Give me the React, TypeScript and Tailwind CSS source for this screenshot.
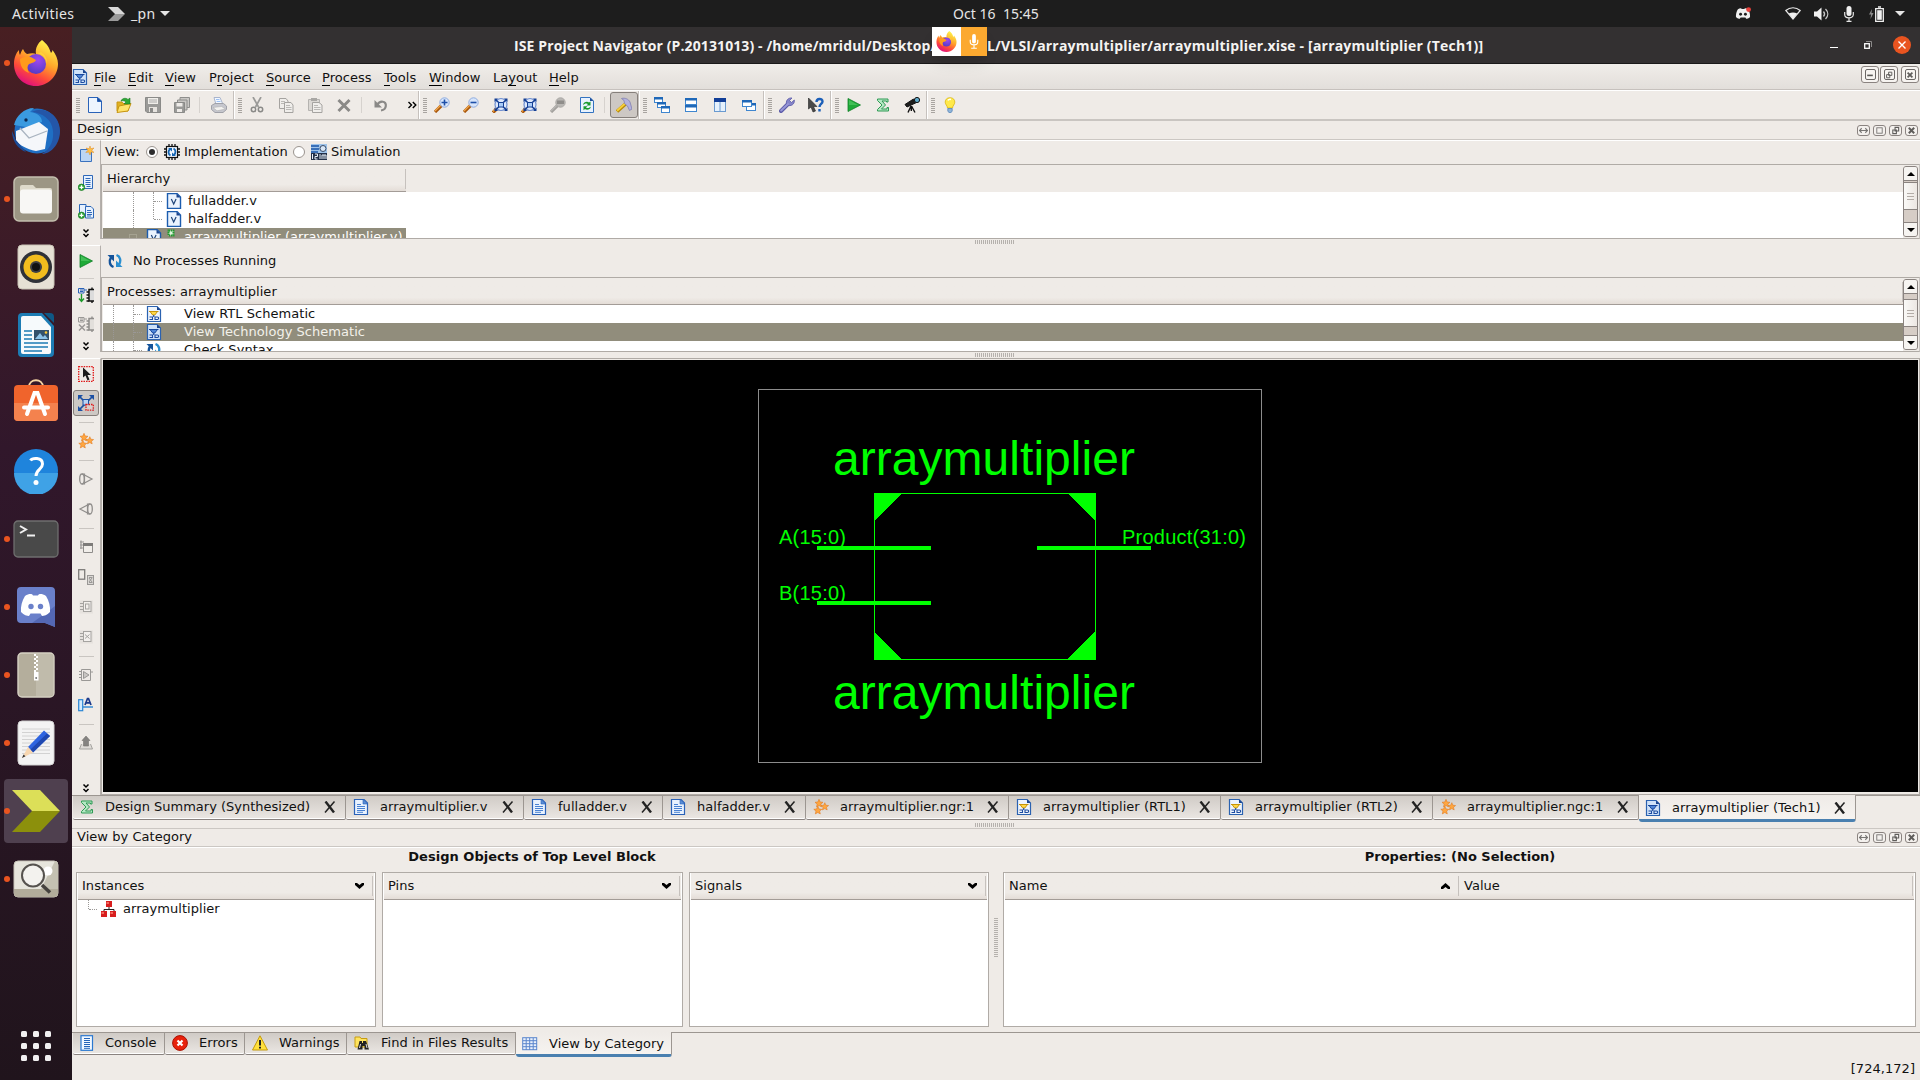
import React from "react";

type SvgProps = { w?: number; h?: number; vb?: string; children: React.ReactNode; className?: string };

function Svg({ w = 16, h = 16, vb = "0 0 16 16", children, className = "" }: SvgProps) {
  return (
    <svg width={w} height={h} viewBox={vb} className={"block shrink-0 " + className} fill="none">
      {children}
    </svg>
  );
}

/* ---------- small application icons ---------- */

const pagePath = "M1.5 .5H11L14.5 4V15.5H1.5Z";

const NewFile = () => (
  <Svg>
    <path d={pagePath} fill="#eef5fe" stroke="#2a62b8" />
    <path d="M10.5 .5V4.5H14.5Z" fill="#1d4f9c" stroke="#2a62b8" />
  </Svg>
);
const OpenFile = () => (
  <Svg>
    <path d="M1 5H6L7 6.5H12V14H1Z" fill="#e0b020" stroke="#c79512" />
    <path d="M3 9L15 6.5L12 14L1 15.5Z" fill="#ffe36b" stroke="#c79512" />
    <path d="M5 4C6 1 10 .5 12 2.5L14 1V7H8L10 5C8.500 3.500 7 3.500 5 4Z" fill="#2ea836" stroke="#177a20" strokeWidth=".6" />
  </Svg>
);
const Save = () => (
  <Svg>
    <path d="M.5 .5H15.500V15.500H2L.5 14Z" fill="#9a9a98" stroke="#8a8a88" />
    <path d="M3 1H13V7H3Z" fill="#f0eeea" />
    <path d="M4 3H12M4 5H12" stroke="#aaa" />
    <path d="M4 10H12V15H4Z" fill="#e6e3df" />
    <path d="M5 11H8V15H5Z" fill="#8a8a88" />
  </Svg>
);
const SaveAll = () => (
  <Svg>
    <path d="M6 .5H15.500V10.500H6Z" fill="#c9c7c4" stroke="#8e8e8c" />
    <path d="M3.500 3H13V13H3.500Z" fill="#c9c7c4" stroke="#8e8e8c" />
    <path d="M.5 5.500H10.500V15.500H.5Z" fill="#9a9a98" stroke="#8a8a88" />
    <path d="M2.500 6H8.500V9.500H2.500ZM3 12H8V15H3Z" fill="#eeebe8" />
  </Svg>
);
const Print = () => (
  <Svg>
    <path d="M3 .5L9 .5L12 7.500H5Z" fill="#f3f8ff" stroke="#a9b4cc" />
    <path d="M5 2.500H8.500M5.600 4.500H9.500" stroke="#9cc0f4" />
    <path d="M.5 8.500L4 6.500H12.500L15.500 9V12.500L12 15.500H4L.5 12.500Z" fill="#c6c7ce" stroke="#a0a1a8" />
    <path d="M2 10.500L10.500 9.500L14.500 12L6 13.800Z" fill="#f3f2f0" stroke="#aaa" strokeWidth=".5" />
  </Svg>
);
const Cut = () => (
  <Svg>
    <path d="M4 0L9.500 10M12 0L6.500 10" stroke="#9a9a98" strokeWidth="1.700" />
    <circle cx="4.500" cy="12.500" r="2.200" stroke="#8a8a88" strokeWidth="1.500" />
    <circle cx="11.500" cy="12.500" r="2.200" stroke="#8a8a88" strokeWidth="1.500" />
  </Svg>
);
const Copy = () => (
  <Svg>
    <path d="M1.500 1.500H8L10 4V11.500H1.500Z" fill="#f0eeeb" stroke="#a5a3a0" />
    <path d="M6.500 5.500H13L15 8V15.500H6.500Z" fill="#f0eeeb" stroke="#a5a3a0" />
    <path d="M8 8.500H12M8 10.500H13.500M8 12.500H13.500M3 4.500H7M3 6.500H6" stroke="#bbb9b6" />
  </Svg>
);
const Paste = () => (
  <Svg>
    <path d="M1.500 2.500H12.500V13.500H1.500Z" fill="#dbd8d4" stroke="#b5b3b0" />
    <path d="M4 1H10V4H4Z" fill="#a9a7a4" />
    <path d="M5.500 5.500H12L15 8V15.500H5.500Z" fill="#f0eeeb" stroke="#a5a3a0" />
    <path d="M7 8.500H11M7 10.500H13.500M7 12.500H13.500" stroke="#bbb9b6" />
  </Svg>
);
const DeleteX = () => (
  <Svg>
    <path d="M2.500 3L13.500 14M13.500 3L2.500 14" stroke="#8a8987" strokeWidth="3" />
  </Svg>
);
const Undo = () => (
  <Svg>
    <path d="M4 8C7 3 13.500 4 12.800 9C12.600 11 11.500 13 8 13.500" stroke="#8a8987" strokeWidth="2.200" />
    <path d="M1.500 3V10.500H9Z" fill="#8a8987" />
  </Svg>
);
const Zoom = ({ kind }: { kind: "in" | "out" | "fit" | "sel" | "off" }) => {
  const off = kind === "off";
  const big = kind === "fit" || kind === "sel";
  return (
    <Svg>
      <path d={big ? "M1 15.500L5 11.500" : "M1 15L7.500 8.500"} stroke={off ? "#a3a19e" : "#a8570c"} strokeWidth="3.200" />
      <path d={big ? "M1 14.500L5 10.500" : "M1 14L7 8"} stroke={off ? "#b9b7b4" : "#f0a64a"} strokeWidth="1.200" />
      {big ? (
        <>
          <circle cx="9" cy="7.500" r="6" fill="#dfe9fb" stroke="#6f8fd0" strokeWidth="1.200" />
          <path d="M3.500 2.500L14.500 13M14.500 2.500L3.500 13" stroke="#153f94" strokeWidth="1.500" />
          <path d="M6.500 5.500H11.500V10H6.500Z" fill="#a9cbf7" stroke="#153f94" />
          <path d="M2.500 1.500H6L2.500 5ZM15.500 1.500H12L15.500 5ZM2.500 14H6L2.500 10.500ZM15.500 14H12L15.500 10.500Z" fill="#153f94" />
        </>
      ) : (
        <>
          <circle cx="10.500" cy="5.500" r="4.700" fill={off ? "#b9b7b4" : "#d7e5fb"} stroke={off ? "#aaa8a5" : "#8fabdf"} />
          {kind === "in" && <path d="M7.500 5.500H13.500M10.500 2.500V8.500" stroke="#1d4fa8" strokeWidth="1.600" />}
          {kind === "out" && <path d="M7.500 5.500H13.500" stroke="#1d4fa8" strokeWidth="1.600" />}
          {off && <path d="M7 3.500H14V7H7Z" fill="#8f8d8a" />}
        </>
      )}
    </Svg>
  );
};
const Refresh = () => (
  <Svg>
    <path d={pagePath} fill="#e8f2fe" stroke="#3373c0" />
    <path d="M11 .5L14.500 4H11Z" fill="#1d4f9c" />
    <path d="M4 8C4.500 4.500 8.500 4 10 5.500L11.500 4.500V8.500H7.500L9 7C7.500 6 5.500 6.500 4 8Z" fill="#189a2c" />
    <path d="M12 9.500C11.500 13 7.500 13.500 6 12L4.500 13.300V9.300H8.500L7 10.500C8.500 11.500 10.500 11 12 9.500Z" fill="#189a2c" />
  </Svg>
);
const Hammer = () => (
  <Svg>
    <path d="M1 14.500L9.500 7" stroke="#b88a08" strokeWidth="3.600" />
    <path d="M1 13.800L9.500 6.300" stroke="#f6cf3c" strokeWidth="2" />
    <path d="M5.500 1.500C9 .5 12.500 2 14 5L16 12L13.500 13.500L11.500 9L8.500 6.500L8 3.500Z" fill="#b3b2de" stroke="#7877ac" strokeWidth=".7" />
  </Svg>
);
const Win = ({ x, y, w, h }: { x: number; y: number; w: number; h: number }) => (
  <>
    <rect x={x + 0.5} y={y + 0.5} width={w} height={h} fill="#fff" stroke="#3f86cf" />
    <rect x={x} y={y} width={w + 1} height="2.500" fill="#1f68b8" />
  </>
);
const Cascade = () => (
  <Svg>
    <Win x={0} y={0} w={8} h={5} />
    <Win x={3} y={5} w={8} h={5} />
    <Win x={7} y={9} w={8} h={6} />
  </Svg>
);
const TileH = () => (
  <Svg>
    <Win x={2} y={1} w={11} h={6} />
    <Win x={2} y={8} w={11} h={6} />
  </Svg>
);
const TileV = () => (
  <Svg>
    <rect x="2.500" y="1.500" width="11" height="13" fill="#e5f1fd" stroke="#6a9ad0" />
    <path d="M2 1H14V5H2Z" fill="#123f98" />
    <path d="M8 5V15" stroke="#6a9ad0" />
  </Svg>
);
const Layer = () => (
  <Svg>
    <Win x={5} y={6} w={9} h={7} />
    <Win x={1} y={3} w={9} h={6} />
  </Svg>
);
const Wrench = () => (
  <Svg>
    <path d="M2 14L9 7" stroke="#5b5aa8" strokeWidth="4" strokeLinecap="round" />
    <path d="M8 8C6 4 9 .5 13 1L10.500 3.500L12.500 5.500L15.300 3C16 7 12 10 8 8Z" fill="#8685c8" stroke="#5b5aa8" strokeWidth=".8" />
    <path d="M2.200 13.500L9 7" stroke="#9897d6" strokeWidth="2" strokeLinecap="round" />
  </Svg>
);
const HelpArrow = () => (
  <Svg>
    <path d="M.5 1V12L3 10L5 15L7.500 14L5.500 9.500H9Z" fill="#4a4a4a" stroke="#222" strokeWidth=".6" />
    <path d="M8.500 5C8.500 1 14.500 1 14.500 4.500C14.500 7 11.500 7 11.500 10M11.500 12V14.500" stroke="#1c5fb8" strokeWidth="2.400" />
  </Svg>
);
const Play = () => (
  <Svg>
    <path d="M2 1.500L14.500 8L2 14.500Z" fill="#1faa38" stroke="#128028" strokeWidth=".8" />
    <path d="M3 3L12 8H3Z" fill="#5fd070" opacity=".55" />
  </Svg>
);
const Sigma = () => (
  <Svg>
    <path d="M2.500 2H13V5H11.500V4H7L10.500 8L6.500 12H12V10.500H13.500V14H2.500V12.500L7 8L2.500 3.500Z" fill="#b5e8c4" stroke="#2f9a54" strokeWidth="1" />
  </Svg>
);
const Telescope = () => (
  <Svg>
    <path d="M1 7.500L9.500 2L12.500 5.500L3 10Z" fill="#1c1c1c" stroke="#111" />
    <circle cx="13" cy="3" r="2.600" fill="#5fa8c8" stroke="#111" />
    <path d="M7 9L4 15.500M7.500 9L11 15.500M7.300 9V14" stroke="#111" strokeWidth="1.400" />
  </Svg>
);
const Bulb = () => (
  <Svg>
    <path d="M8 .7C4.500 .7 3.200 3 3.200 5.200C3.200 7.500 5.300 8.500 5.500 11H10.500C10.700 8.500 12.800 7.500 12.800 5.200C12.800 3 11.500 .7 8 .7Z" fill="#ffe94a" stroke="#d6b000" strokeWidth=".7" />
    <path d="M6 3.500C6.500 2.500 8 2 9 2.500" stroke="#fff" strokeWidth="1.500" />
    <path d="M5.800 11.500H10.200V14L9 15.700H7L5.800 14Z" fill="#8fb4d8" stroke="#4c7eb4" strokeWidth=".7" />
  </Svg>
);
const Schem = ({ gold = false }: { gold?: boolean }) => (
  <Svg>
    <path d={pagePath} fill={gold ? "#eef4fc" : "#cfe2f8"} stroke="#2b62b0" strokeWidth="1.200" />
    <path d="M11 .5L14.500 4H11Z" fill="#1b458e" />
    <path d="M3 5.500H12.500M4 5.500H11.500L8.800 9H6.700Z" fill={gold ? "#ffd84a" : "#4f86d6"} stroke={gold ? "#c89508" : "#17479c"} />
    <path d="M7.700 9V11M3.500 11H6.500V13.500H3.500M9 11H11.500C13 11 13 13.500 11.500 13.500H9Z" stroke="#1c4ba0" strokeWidth="1.100" />
  </Svg>
);
const Doc = () => (
  <Svg>
    <path d={pagePath} fill="#e9f2fe" stroke="#2a62b8" strokeWidth="1.200" />
    <path d="M10 .5L14.500 5H10Z" fill="#5b8fd8" stroke="#2a62b8" strokeWidth=".6" />
    <path d="M4 5.500H8M4 7.500H12M4 9.500H12M4 11.500H12M4 13.300H10" stroke="#4a82d2" />
  </Svg>
);
const VFile = () => (
  <Svg>
    <path d={pagePath} fill="#eaf3fe" stroke="#1c5cae" strokeWidth="1.400" />
    <path d="M10.500 .5L14.500 4.500H10.500Z" fill="#1b458e" />
    <path d="M5.300 6L7.700 11L10.100 6" stroke="#20467a" strokeWidth="1.200" />
  </Svg>
);
const star = "M0 -4L1.200 -1.300L4 -1L1.800 .8L2.500 3.600L0 2.200L-2.500 3.600L-1.800 .8L-4 -1L-1.200 -1.300Z";
const Stars = () => (
  <Svg>
    <g fill="#ffa640" stroke="#e07a20" strokeWidth=".6">
      <path d={star} transform="translate(6 4.300)" />
      <path d={star} transform="translate(11.800 7.500) scale(.95)" />
      <path d={star} transform="translate(4.800 11.300)" />
    </g>
  </Svg>
);
const Cycle = () => (
  <Svg>
    <path d="M6.500 14C2.500 12.500 1.800 8 4 4.500" stroke="#14539a" strokeWidth="2.400" />
    <path d="M.5 2H7V8.500Z" fill="#14539a" />
    <path d="M9.500 2C13.500 3.500 14.200 8 12 11.500" stroke="#2b8fd0" strokeWidth="2.400" />
    <path d="M15.500 14H9V7.500Z" fill="#2b8fd0" />
  </Svg>
);
const Chip = () => (
  <Svg>
    <path d="M5 0V16M8 0V16M11 0V16M0 5H16M0 8H16M0 11H16" stroke="#111" strokeWidth="1.300" />
    <rect x="2.500" y="2.500" width="11" height="11" fill="#f4f9ff" stroke="#111" strokeWidth="1.200" />
    <path d="M6.500 11.500C4 10 4 7 6 5M9.500 4.500C12 6 12 9 10 11" stroke="#1666b4" strokeWidth="1.800" />
    <path d="M4 4H8V7.500ZM12 12H8V8.500Z" fill="#1666b4" />
  </Svg>
);
const Sim = () => (
  <Svg>
    <rect x="0" y="0" width="16" height="16" fill="#9ec3ea" />
    <path d="M0 2H8M0 5H8M0 8H7" stroke="#1a56a8" strokeWidth="1.400" />
    <circle cx="12" cy="4.500" r="3" fill="#d8e6f6" stroke="#3a4c68" />
    <path d="M0 9H16V16H0Z" fill="#233047" />
    <path d="M1.500 10V15M4 10H6.500V12.500H4V15H6.500M9 10V15M11 15V11H15V15M13 11V15" stroke="#e8f0fa" />
  </Svg>
);
const AddDoc = ({ two = false }: { two?: boolean }) => (
  <Svg>
    {two && <path d="M1.500 1.500H8V12H1.500Z" fill="#e7f1fe" stroke="#2f68b8" />}
    <path d={two ? "M7.500 3.500H13L15.500 6V15H7.500Z" : "M5.500 .5H14.500V13.500H5.500Z"} fill="#e7f1fe" stroke="#2f68b8" />
    <path d={two ? "M9 7.500H13M9 9.500H14M9 11.500H14M9 13H13" : "M7.500 3.500H12.500M7.500 5.500H12.500M7.500 7.500H12.500M7.500 9.500H12.500M8.500 11.500H12.500"} stroke="#2f68b8" />
    <circle cx="3.500" cy="12.300" r="3.200" fill="#2fa83a" stroke="#14761e" strokeWidth=".7" />
    <path d="M1.500 12.300H5.500M3.500 10.300V14.300" stroke="#fff" strokeWidth="1.300" />
  </Svg>
);
const NewSrc = () => (
  <Svg>
    <path d="M2.500 3.500H13.500V15.500H2.500Z" fill="#bcd6f4" stroke="#3a72be" />
    <path d="M12 0L12.800 2.700L16 2L13.800 4.200L16 6.500L13 6L12 9L10.800 6L7.800 6.500L10 4.200L8 2L11.200 2.700Z" fill="#ffc04a" stroke="#e08a1a" strokeWidth=".5" />
  </Svg>
);
const ProcIcon = ({ off = false }: { off?: boolean }) => (
  <Svg>
    <path d="M.5 1.500H6V6H.5ZM2 3H5M2 4.500H5M6 3H9" stroke={off ? "#9a9896" : "#2a62b8"} />
    <path d="M16 2.500H11V14H16" fill={off ? "#e2dfdb" : "#dcdcdc"} stroke={off ? "#8f8d8b" : "#111"} strokeWidth="1.500" />
    <path d="M8.500 5H11M8.500 8H11M8.500 11H11M8.500 14H11M14 .5V2.500M14 14V16" stroke={off ? "#8f8d8b" : "#111"} strokeWidth="1.400" />
    {off ? <path d="M1 8.500L7 14.500M7 8.500L1 14.500" stroke="#9a9896" strokeWidth="1.500" /> : <path d="M3.500 7V14M1 11.500L3.500 14.500L6 11.500" stroke="#1f9a2c" strokeWidth="1.400" />}
  </Svg>
);
const ArrowSel = () => (
  <Svg>
    <rect x=".7" y=".7" width="14.600" height="14.600" stroke="#e01818" strokeWidth="1.300" strokeDasharray="1.500 1" />
    <path d="M5 1.500V11.500L7.500 9.500L9.500 14.500L11.500 13.500L9.500 9H13Z" fill="#1b1b1b" />
  </Svg>
);
const Expand = () => (
  <Svg>
    <path d="M1 1L15 15M15 1L1 15" stroke="#1c50a4" strokeWidth="1.700" />
    <path d="M0 0H5L0 5ZM16 0H11L16 5ZM0 16H5L0 11Z" fill="#1c50a4" />
    <rect x="5" y="4.500" width="5.500" height="5.500" fill="#b8d4f6" stroke="#1c50a4" />
    <rect x="8" y="9.500" width="7.300" height="5.700" fill="#d8d0cc" stroke="#e01818" strokeWidth="1.300" strokeDasharray="1.500 1" />
  </Svg>
);
const Cone = ({ flip = false }: { flip?: boolean }) => (
  <Svg className={flip ? "-scale-x-100" : ""}>
    <ellipse cx="4" cy="8" rx="2.300" ry="5" stroke="#8f8d8b" strokeWidth="1.300" />
    <path d="M4 3H6.500V13H4M6.500 4L14 8L6.500 12" stroke="#8f8d8b" strokeWidth="1.200" />
  </Svg>
);
const Gray1 = () => (
  <Svg>
    <path d="M2 3H6M2 6H6M2 9H5M3 1.500V10" stroke="#9a9896" strokeWidth="1.200" />
    <path d="M5.500 4.500H14.500V13.500H5.500Z" fill="#f1eeea" stroke="#8f8d8b" />
    <path d="M5 4H15V7H5Z" fill="#7d7b79" />
  </Svg>
);
const Gray2 = () => (
  <Svg>
    <rect x=".7" y=".7" width="6" height="9.500" stroke="#7d7b79" strokeWidth="1.300" />
    <rect x="9.500" y="6.500" width="6" height="9" fill="#dbd8d5" stroke="#9a9896" />
    <path d="M11 8.500H14.500M11 13.500H14.500M11 9L14 13M14 9L11 13" stroke="#9a9896" />
  </Svg>
);
const Gray3 = ({ x = false }: { x?: boolean }) => (
  <Svg>
    <rect x="1.500" y="1.500" width="13.500" height="13" fill="#e6e2de" />
    <rect x="5.500" y="2.500" width="7.500" height="10" fill="#f3f0ed" stroke="#a5a3a0" />
    <path d="M2 4.500H5M2 7.500H5M2 10.500H5" stroke="#a5a3a0" />
    {x ? <path d="M7 5.500L11.500 9.500M11.500 5.500L7 9.500" stroke="#a5a3a0" /> : <rect x="7.500" y="5" width="3.500" height="5" stroke="#a5a3a0" />}
  </Svg>
);
const Gray4 = () => (
  <Svg>
    <path d="M3.500 2.500H12.500V13.500H3.500ZM1 4.500H3.500M1 7.500H3.500M1 10.500H3.500M12.500 5H15" stroke="#9a9896" />
    <path d="M5.500 4.500L11 8L5.500 11.500Z" fill="#c9c6c3" stroke="#9a9896" />
  </Svg>
);
const TextA = () => (
  <Svg>
    <rect x=".7" y="2.700" width="4" height="11" fill="#d2ecff" stroke="#2a86d4" strokeWidth="1.200" />
    <path d="M5 10H15" stroke="#2a86d4" strokeWidth="1.400" />
    <path d="M7 8L9.500 1.500H10.500L13 8M8.300 5.800H11.700" stroke="#1c3a8c" strokeWidth="1.700" />
  </Svg>
);
const UpHier = () => (
  <Svg>
    <path d="M3.500 9L1.500 14H14.500L12.500 9" stroke="#a5a3a0" fill="#dedbd7" />
    <path d="M8 1L12 5.500H10.500V11H5.500V5.500H4Z" fill="#858381" stroke="#757371" strokeWidth=".6" />
  </Svg>
);
const ConsoleI = () => (
  <Svg>
    <rect x="2" y=".7" width="11.500" height="14.600" fill="#f2f8ff" stroke="#2a78d0" strokeWidth="1.200" />
    <path d="M5 3.500H11M5 5.500H11M5 7.500H11M5 9.500H11M5 11.500H11M5 13.300H11" stroke="#2464b8" />
  </Svg>
);
const ErrorI = () => (
  <Svg>
    <circle cx="8" cy="8" r="7.400" fill="#e8220c" stroke="#a81204" />
    <path d="M5.500 5.500L10.500 10.500M10.500 5.500L5.500 10.500" stroke="#fff" strokeWidth="2.200" />
  </Svg>
);
const WarnI = () => (
  <Svg>
    <path d="M8 .8L15.500 15H.5Z" fill="#ffe03c" stroke="#c49a0c" />
    <path d="M8 5V10.500M8 11.800V13.600" stroke="#222" strokeWidth="2" />
  </Svg>
);
const FindI = () => (
  <Svg>
    <path d="M1 2H6L7 3.500H13V12H1Z" fill="#ffe45e" stroke="#c79c12" />
    <path d="M5.500 6H8V8H9V6H12L15 14.500H10.500V11H8.500V14.500H3.500Z" fill="#222" />
    <path d="M6.500 9L5.500 13M12 9L13 13" stroke="#ddd" />
  </Svg>
);
const GridI = () => (
  <Svg>
    <rect x=".7" y="1.700" width="14" height="12" fill="#e9f0fb" stroke="#5a86cc" />
    <path d="M4.200 2V14M7.700 2V14M11.200 2V14M1 4.700H15M1 7.700H15M1 10.700H15" stroke="#5a86cc" />
  </Svg>
);
const HierI = () => (
  <Svg>
    <path d="M8 6V9M3 11V8.500H13V11" stroke="#222" />
    <path d="M5 0H11V6H5ZM0 10H6V16H0ZM9 10H15V16H9Z" fill="#d81e1e" />
    <path d="M5.500 1H8V3H5.500ZM.5 11H3V13H.5ZM9.500 11H12V13H9.500Z" fill="#f06a5e" />
  </Svg>
);
const CloseX = () => (
  <Svg w={12} h={12} vb="0 0 12 12">
    <path d="M1.500 .5L10 11.500" stroke="#222" strokeWidth="2.400" />
    <path d="M10.500 .5L1 11.500" stroke="#222" strokeWidth="1.500" />
  </Svg>
);
const More = () => (
  <Svg w={8} h={9} vb="0 0 8 9">
    <path d="M1.500 .5L4 3L6.500 .5M1.500 5L4 7.500L6.500 5" stroke="#000" strokeWidth="1.500" />
  </Svg>
);

/* ---------- launcher icons ---------- */

const Firefox = ({ s = 46 }: { s?: number }) => (
  <Svg w={s} h={s} vb="0 0 46 46">
    <defs>
      <linearGradient id="fx" x1=".8" y1=".1" x2=".35" y2="1">
        <stop offset="0" stopColor="#fff04a" />
        <stop offset=".4" stopColor="#ffa52a" />
        <stop offset=".72" stopColor="#ff4a3a" />
        <stop offset="1" stopColor="#e0107c" />
      </linearGradient>
      <radialGradient id="fp" cx=".6" cy=".3" r=".8">
        <stop offset="0" stopColor="#a048f0" />
        <stop offset="1" stopColor="#4a3ac0" />
      </radialGradient>
    </defs>
    <path d="M29 0C34 4 36 7 38 13C39 12 39.500 11 39.500 10C43 15 45 19 45 24C45 36 35 46 23 46C10 46 1 36 1 24C1 18 3 13 6 10C6 12 6 13 7 15C8 12 9 10 10 9C11 11 12 13 14 14C18 13 21 13 23 14C22 8 25 3 29 0Z" fill="url(#fx)" />
    <circle cx="23" cy="24" r="10" fill="url(#fp)" />
    <path d="M7 19C12 16 16 15 23 20C22 23 18 23 16 24C14 26 14 29 16 33C10 31 7 26 7 19Z" fill="#ff9a1c" />
    <path d="M24 14C28 13 33 17 34 24C34 18 32 15 28 12Z" fill="#ffd23c" />
  </Svg>
);
const Thunderbird = () => (
  <Svg w={48} h={48} vb="0 0 48 48">
    <circle cx="25" cy="24" r="22.500" fill="#1f6fc4" />
    <path d="M48 24C48 38 38 47 30 47C38 42 42 34 41 24C40 12 30 6 20 5C32 -2 48 8 48 24Z" fill="#2456a8" />
    <path d="M2 18C4 9 12 1 22 1L18 5C26 6 30 10 30 15L14 20Z" fill="#3a9ae0" />
    <path d="M4 24L27 15L36 22L33 42L24 44C14 42 8 38 4 34Z" fill="#f5f7fa" />
    <path d="M8 21L17 31L35 24" stroke="#a9b4c0" strokeWidth="1.300" />
    <path d="M0 24C0 34 6 42 14 45L4 33Z" fill="#1c4c98" />
    <circle cx="14" cy="13" r="1.700" fill="#0c2850" />
  </Svg>
);
const Files = () => (
  <Svg w={46} h={46} vb="0 0 46 46">
    <rect x="1" y="1" width="44" height="44" rx="5" fill="#9c9684" stroke="#c4bfae" strokeWidth="1.500" />
    <path d="M7 11Q7 9 9 9H20L23 12H37Q39 12 39 14V18H7Z" fill="#dedacb" />
    <rect x="7" y="13.500" width="32" height="24" rx="3" fill="#f8f7f5" />
  </Svg>
);
const Rhythmbox = () => (
  <Svg w={38} h={46} vb="0 0 38 46">
    <rect x="1" y="1" width="36" height="44" rx="4" fill="#e6e1d5" stroke="#c9c4b6" />
    <circle cx="19" cy="23" r="16" fill="#2f3238" />
    <circle cx="19" cy="23" r="12.500" fill="#f1bd1e" />
    <circle cx="19" cy="23" r="6" fill="#3c3e44" />
    <circle cx="19" cy="23" r="4" fill="#111" />
  </Svg>
);
const Writer = () => (
  <Svg w={38} h={46} vb="0 0 38 46">
    <path d="M5 1H25L37 14V41Q37 45 33 45H5Q1 45 1 41V5Q1 1 5 1Z" fill="#1c7cb4" />
    <path d="M27 1H33Q37 1 37 5V11Z" fill="#0f5886" />
    <path d="M6 4H24L34 15V40Q34 42 32 42H6Q4 42 4 40V6Q4 4 6 4Z" fill="#f6fafc" />
    <path d="M7 19H15M7 23H15M7 27H15M7 31H31M7 35H31M7 39H25" stroke="#1c7cb4" strokeWidth="1.700" />
    <rect x="17" y="18" width="15" height="10" fill="#33516c" />
    <path d="M18 27L23 21L26 25L28 23L31 27Z" fill="#8dc3e8" />
    <circle cx="29" cy="20.500" r="1.300" fill="#ffc933" />
  </Svg>
);
const Software = () => (
  <Svg w={46} h={44} vb="0 0 46 44" className="-mt-1.5">
    <path d="M16 9C16 0 30 0 30 9" stroke="#f6d6a4" strokeWidth="1.800" />
    <rect x="1" y="7" width="44" height="36" rx="4" fill="#f0642c" />
    <path d="M1 25H45V39Q45 43 41 43H5Q1 43 1 39Z" fill="#f4824e" />
    <path d="M14 36L21.500 15H24.500L32 36M11 29.500H35" stroke="#fff" strokeWidth="4" strokeLinecap="round" />
  </Svg>
);
const Help = () => (
  <Svg w={46} h={46} vb="0 0 46 46" className="-mt-px">
    <circle cx="23" cy="23" r="22" fill="#1f84dc" />
    <path d="M1 25H45A22 22 0 0 1 1 25Z" fill="#3fa2e6" />
    <path d="M17.500 12.500C19 10 29.500 8.500 29.500 16C29.500 21.500 23 21.500 23 28" stroke="#fff" strokeWidth="3" />
    <circle cx="23" cy="34.500" r="2.500" fill="#fff" />
  </Svg>
);
const Terminal = () => (
  <Svg w={46} h={38} vb="0 0 46 38">
    <rect x="1" y="1" width="44" height="36" rx="4" fill="#494949" stroke="#6f6f6f" strokeWidth="1.300" />
    <path d="M7 6L13 9.500L7 13M14 15.500H22" stroke="#f0f0f0" strokeWidth="2" />
  </Svg>
);
const discordFace = "M9 10C13 7.500 16 7.500 17 9.500H22C23 7.500 26 7.500 30 10C33 15 34.500 20 34 26C31 29 28 30 26 30L24.500 27.500H14.500L13 30C11 30 8 29 5 26C4.500 20 6 15 9 10Z";
const Discord = () => (
  <Svg w={40} h={42} vb="0 0 40 42">
    <path d="M5 1H35Q39 1 39 5V41L29 37L28 37H5Q1 37 1 33V5Q1 1 5 1Z" fill="#6a80ca" />
    <path d="M39 20V41L29 37H16L34 24Z" fill="#5468b4" />
    <path d={discordFace} fill="#fff" />
    <circle cx="15" cy="20.500" r="2.700" fill="#6a80ca" />
    <circle cx="24.500" cy="20.500" r="2.700" fill="#6a80ca" />
  </Svg>
);
const Archive = () => (
  <Svg w={38} h={46} vb="0 0 38 46">
    <rect x="1" y="1" width="36" height="44" rx="4" fill="#b4ae9c" stroke="#d6d2c4" strokeWidth="1.400" />
    <path d="M19 2H34Q36 2 36 5V41Q36 44 33 44H19Z" fill="#c0bbab" />
    <path d="M18 2V20" stroke="#fff" strokeWidth="2" strokeDasharray="2 2" />
    <path d="M20 4V20" stroke="#fff" strokeWidth="2" strokeDasharray="2 2" />
    <rect x="17" y="20" width="4.500" height="8.500" fill="#fff" />
    <circle cx="19.200" cy="26" r="1" fill="#777" />
  </Svg>
);
const Editor = () => (
  <Svg w={38} h={46} vb="0 0 38 46">
    <rect x="1" y="1" width="36" height="44" rx="4" fill="#f3f3f3" stroke="#d4d4d4" />
    <path d="M5 9H33M5 12.500H33M5 16H33M5 19.500H33M5 23H33M5 26.500H33M5 30H33M5 33.500H33" stroke="#d2d2d2" />
    <path d="M11 27L27 10.500L33 16L16 32.500Z" fill="#2e64e0" />
    <path d="M13.500 29.500L30 13.500L33 16L16 32.500Z" fill="#1f48b0" />
    <path d="M11 27L16 32.500L5 38Z" fill="#f7d6b0" />
    <path d="M6.500 34.500L8.500 36.300L5 38Z" fill="#333" />
  </Svg>
);
const Xilinx = () => (
  <Svg w={48} h={42} vb="0 0 48 42">
    <path d="M0 0H28L48 21H20Z" fill="#dcdf58" />
    <path d="M20 21H48L28 42H0Z" fill="#8c900c" />
  </Svg>
);
const Viewer = () => (
  <Svg w={46} h={38} vb="0 0 46 38">
    <rect x="1" y="1" width="44" height="36" rx="4" fill="#e6e5dc" stroke="#c9c6ba" />
    <path d="M28 29L42 1Q45 1 45 5V29Z" fill="#c4c1b2" />
    <path d="M1 29H45V33Q45 37 41 37H5Q1 37 1 33Z" fill="#b2ad9b" />
    <circle cx="35" cy="11" r="4.500" fill="#fff" />
    <circle cx="20" cy="15.500" r="11" fill="#f3f2ee" stroke="#55524e" strokeWidth="2" />
    <path d="M29 25L37 32.500" stroke="#45423e" strokeWidth="3.500" />
  </Svg>
);

const dock: { icon: React.ReactNode; dot?: boolean; active?: boolean }[] = [
  { icon: <Firefox />, dot: true },
  { icon: <Thunderbird /> },
  { icon: <Files />, dot: true },
  { icon: <Rhythmbox /> },
  { icon: <Writer /> },
  { icon: <Software /> },
  { icon: <Help /> },
  { icon: <Terminal />, dot: true },
  { icon: <Discord />, dot: true },
  { icon: <Archive />, dot: true },
  { icon: <Editor />, dot: true },
  { icon: <Xilinx />, dot: true, active: true },
  { icon: <Viewer />, dot: true },
];

function Dock() {
  return (
    <nav className="flex w-[72px] shrink-0 flex-col bg-linear-to-b from-[#481f22] via-[#31172b] via-40% to-[#20141c] pt-[2px]">
      {dock.map((d, i) => (
        <div key={i} className="flex h-[68px] items-center">
          <div className="flex w-1 shrink-0" />
          <div className={"flex h-16 w-16 items-center rounded-[4px] " + (d.active ? "bg-[#4f404f]" : "")}>
            <span className={"-mr-1.5 h-1.5 w-1.5 shrink-0 rounded-full " + (d.dot ? "bg-[#e95420]" : "")} />
            <span className="flex w-16 justify-center">{d.icon}</span>
          </div>
        </div>
      ))}
      <div className="mt-auto mb-[19px] grid grid-cols-3 gap-1.5 self-center">
        {Array.from({ length: 9 }, (_, i) => (
          <span key={i} className="h-1.5 w-1.5 rounded-[1.500px] bg-[#f1f0f1]" />
        ))}
      </div>
    </nav>
  );
}

/* ---------- chrome ---------- */

function TopBar() {
  return (
    <header className="flex h-[27px] shrink-0 items-center bg-[#1d1d1d] font-['Noto_Sans','Open_Sans',sans-serif] text-[14px] text-[#e6e6e6]">
      <div className="w-[96px] pl-3 tracking-[0.400px]">Activities</div>
      <div className="flex w-[857px] items-center pl-3">
        <Svg w={17} h={14} vb="0 0 17 14">
          <path d="M0 0H10L17 7H7Z" fill="#d8d8d8" />
          <path d="M7 7H17L10 14H0Z" fill="#9a9a9a" />
        </Svg>
        <span className="ml-1.5 tracking-[0.300px]">_pn</span>
        <Svg w={10} h={5} vb="0 0 10 5" className="ml-[5px]">
          <path d="M0 0H10L5 5Z" fill="#e6e6e6" />
        </Svg>
      </div>
      <div className="whitespace-pre tracking-[0.030px]">Oct 16  15:45</div>
      <div className="ml-auto flex items-center pr-[15px]">
        <Svg w={16} h={13} vb="3 6 33 26" className="mr-[34px]">
          <path d={discordFace} fill="#f0f0f0" />
          <circle cx="14.500" cy="20.500" r="3" fill="#1d1d1d" />
          <circle cx="24.500" cy="20.500" r="3" fill="#1d1d1d" />
          <circle cx="31" cy="11" r="5" fill="#e8413c" />
        </Svg>
        <Svg w={16} h={13} vb="0 0 16 13" className="mr-[13px]">
          <path d="M.8 3.500C5 -.2 11 -.2 15.200 3.500L8 12Z" stroke="#e6e6e6" strokeWidth="1.200" />
          <path d="M3.800 6.500C6.500 5 9.500 5 12.200 6.500L8 12Z" fill="#f0f0f0" />
        </Svg>
        <Svg w={16} h={14} vb="0 0 16 14" className="mr-3.5">
          <path d="M0 4.500H3L7.500 .5V13.500L3 9.500H0Z" fill="#f0f0f0" />
          <path d="M9.500 4.500C10.800 6 10.800 8 9.500 9.500M11.500 2C14.500 5 14.500 9 11.500 12" stroke="#c8c8c8" strokeWidth="1.300" />
        </Svg>
        <Svg w={10} h={16} vb="0 0 10 16" className="mr-[15px]">
          <rect x="2.500" y="0" width="5" height="10" rx="2.500" fill="#f0f0f0" />
          <path d="M.7 6V8.500C.7 13 9.300 13 9.300 8.500V6M5 12V15.300M2.500 15.300H7.500" stroke="#e6e6e6" strokeWidth="1.200" />
        </Svg>
        <Svg w={15} h={16} vb="0 0 15 16" className="mr-[11px]">
          <path d="M3 3L0 8.500H2L1.500 13L4.500 7H2.500Z" fill="#8a8a8a" />
          <path d="M6.700 2.700H14.300V15.300H6.700ZM9 1H12" stroke="#f0f0f0" strokeWidth="1.300" />
          <rect x="8.200" y="4.200" width="4.600" height="9.600" fill="#f0f0f0" />
        </Svg>
        <Svg w={10} h={5} vb="0 0 10 5">
          <path d="M0 0H10L5 5Z" fill="#e6e6e6" />
        </Svg>
      </div>
    </header>
  );
}

function TitleBar() {
  return (
    <div className="relative flex h-[37px] shrink-0 items-center border-b border-[#1a1919] bg-[#333031] pt-[2px] pl-[442px] font-['Open_Sans','Noto_Sans',sans-serif] text-[14px] font-bold text-[#f5f3f2]">
      <span className="w-[473px] shrink-0 whitespace-nowrap tracking-[0.110px]">ISE Project Navigator (P.20131013) - /home/mridul/Desktop/</span>
      <span className="whitespace-nowrap tracking-[0.190px]">L/VLSI/arraymultiplier/arraymultiplier.xise - [arraymultiplier (Tech1)]</span>
      <div className="absolute top-0 left-[860px] flex h-[29px] shadow-lg">
        <div className="flex w-[29px] items-center justify-center bg-white">
          <Firefox s={21} />
        </div>
        <div className="flex w-[26px] items-center justify-center bg-[#fca930]">
          <Svg w={10} h={15} vb="0 0 10 16">
            <rect x="3" y="0" width="4" height="10" rx="2" fill="#fff" />
            <path d="M1 6V8.500C1 12.500 9 12.500 9 8.500V6M5 12V15M2 15.200H8" stroke="#fff" strokeWidth="1.200" />
          </Svg>
        </div>
      </div>
      <div className="absolute top-[9px] right-[9px] flex h-[18px] items-center">
        <span className="mt-[5px] mr-[26px] h-px w-2 bg-white" />
        <Svg w={8} h={8} vb="0 0 8 8" className="mr-[21px]">
          <path d="M2 .5H7.500V6" stroke="#8c8a8a" />
          <rect x=".7" y="2.700" width="4.600" height="4.600" stroke="#fff" strokeWidth="1.300" />
        </Svg>
        <span className="flex h-[18px] w-[18px] items-center justify-center rounded-full bg-[#e95420]">
          <Svg w={8} h={8} vb="0 0 8 8">
            <path d="M.5 .5L7.500 7.500M7.500 .5L.5 7.500" stroke="#fff" strokeWidth="1.400" />
          </Svg>
        </span>
      </div>
    </div>
  );
}

type BtnKind = "min" | "arrow" | "box" | "restore" | "close";
const glyph: Record<BtnKind, React.ReactNode> = {
  min: <path d="M1.500 5.500H8.500" stroke="#5a5856" strokeWidth="2" />,
  arrow: <path d="M0 5H10M3 2.500L.5 5L3 7.500M7 2.500L9.500 5L7 7.500" stroke="#777573" strokeWidth="1.200" />,
  box: <rect x="2" y="2" width="6" height="6" stroke="#777573" />,
  restore: <path d="M4.500 1.500H8.500V5.500H4.500ZM2 4.500H6V8.500H2Z" stroke="#5f5d5b" strokeWidth="1.200" />,
  close: <path d="M2 2L8 8M8 2L2 8" stroke="#5f5d5b" strokeWidth="2.200" />,
};
const DockBtn = ({ k }: { k: BtnKind }) => (
  <span className="flex h-[11px] w-[13px] items-center justify-center rounded-[3px] border border-[#8a8380] bg-[#f4f1ee]">
    <Svg w={9} h={9} vb="0 0 10 10">{glyph[k]}</Svg>
  </span>
);
const MdiBtn = ({ k, className = "" }: { k: BtnKind; className?: string }) => (
  <span className={"flex h-[17px] w-[18px] items-center justify-center rounded-[3px] border border-[#8a8380] bg-[#f7f4f1] " + className}>
    <span className="flex h-[11px] w-[11px] items-center justify-center rounded-[2px] border border-[#6c6866]">
      <Svg w={8} h={8} vb="0 0 10 10">{glyph[k]}</Svg>
    </span>
  </span>
);

const menus: [string, string, string, string][] = [
  ["", "F", "ile", "w-[34px]"],
  ["", "E", "dit", "w-[37px]"],
  ["", "V", "iew", "w-[44px]"],
  ["P", "r", "oject", "w-[57px]"],
  ["", "S", "ource", "w-[56px]"],
  ["", "P", "rocess", "w-[62px]"],
  ["", "T", "ools", "w-[45px]"],
  ["", "W", "indow", "w-[64px]"],
  ["La", "y", "out", "w-[56px]"],
  ["", "H", "elp", "w-[40px]"],
];

function MenuBar() {
  return (
    <div className="flex h-[27px] shrink-0 items-center border-b border-white bg-linear-to-b from-[#f0ede9] to-[#e2deda] shadow-[inset_0_-1px_#c6c1bd]">
      <Schem />
      <div className="mt-px ml-1.5 flex">
        {menus.map(([a, u, b, w]) => (
          <span key={a + u + b} className={w + " whitespace-nowrap"}>
            {a}
            <span className="border-b border-black">{u}</span>
            {b}
          </span>
        ))}
      </div>
      <div className="mr-px mb-[5px] ml-auto flex">
        <MdiBtn k="min" />
        <MdiBtn k="restore" className="ml-px" />
        <MdiBtn k="close" className="ml-[3px]" />
      </div>
    </div>
  );
}

const Grip = () => (
  <span className="ml-1 flex w-1 shrink-0 flex-col gap-px">
    {Array.from({ length: 8 }, (_, i) => (
      <span key={i} className="h-px bg-[#a8a4a0]" />
    ))}
  </span>
);
const Slot = ({ children }: { children: React.ReactNode }) => <span className="flex w-[29px] shrink-0 items-center justify-center">{children}</span>;
const VSep = () => (
  <span className="flex w-2 shrink-0 justify-start pl-[3px]">
    <span className="h-4 w-px bg-[#d6d2ce]" />
  </span>
);
const Group = ({ children, className = "" }: { children: React.ReactNode; className?: string }) => (
  <div className={"flex h-full shrink-0 items-center border-r border-[#c6c1bd] shadow-[1px_0_#fff] " + className}>
    <Grip />
    {children}
  </div>
);

function Toolbar() {
  return (
    <div className="flex h-[30px] shrink-0 items-center border-b-2 border-[#c9c5c1]">
      <Group className="w-[162px]">
        <Slot><NewFile /></Slot>
        <Slot><OpenFile /></Slot>
        <Slot><Save /></Slot>
        <Slot><SaveAll /></Slot>
        <VSep />
        <Slot><Print /></Slot>
      </Group>
      <Group className="w-[185px]">
        <Slot><Cut /></Slot>
        <Slot><Copy /></Slot>
        <Slot><Paste /></Slot>
        <Slot><DeleteX /></Slot>
        <VSep />
        <Slot><Undo /></Slot>
        <Svg w={9} h={8} vb="0 0 9 8" className="ml-[13px]">
          <path d="M.5 1L3.500 4L.5 7M4.800 1L7.800 4L4.800 7" stroke="#000" strokeWidth="1.400" />
        </Svg>
      </Group>
      <Group className="w-[220px]">
        <Slot><Zoom kind="in" /></Slot>
        <Slot><Zoom kind="out" /></Slot>
        <Slot><Zoom kind="fit" /></Slot>
        <Slot><Zoom kind="sel" /></Slot>
        <Slot><Zoom kind="off" /></Slot>
        <Slot><Refresh /></Slot>
        <VSep />
        <span className="ml-px flex h-[26px] w-7 shrink-0 items-center justify-center rounded-[3px] border border-[#857f7b] bg-[#cdc8c4]">
          <Hammer />
        </span>
      </Group>
      <Group className="w-[125px]">
        <Slot><Cascade /></Slot>
        <Slot><TileH /></Slot>
        <Slot><TileV /></Slot>
        <Slot><Layer /></Slot>
      </Group>
      <Group className="w-[67px]">
        <Slot><Wrench /></Slot>
        <Slot><HelpArrow /></Slot>
      </Group>
      <Group className="w-[96px]">
        <Slot><Play /></Slot>
        <Slot><Sigma /></Slot>
        <Slot><Telescope /></Slot>
      </Group>
      <Grip />
      <Slot><Bulb /></Slot>
    </div>
  );
}

function PanelTitle({ children, className, textClass }: { children: string; className: string; textClass: string }) {
  return (
    <div className={"flex shrink-0 items-center justify-between border-b border-[#cbc7c3] pr-0.5 pl-[5px] shadow-[0_1px_#fff] " + className}>
      <span className={textClass}>{children}</span>
      <span className="flex gap-[3px]">
        <DockBtn k="arrow" />
        <DockBtn k="box" />
        <DockBtn k="restore" />
        <DockBtn k="close" />
      </span>
    </div>
  );
}

const SplitH = ({ className = "" }: { className?: string }) => (
  <div className={"flex shrink-0 justify-center pr-[3px] " + className}>
    <span className="h-1 w-10 bg-[repeating-linear-gradient(90deg,#b5b1ad_0_1px,transparent_1px_2px)]" />
  </div>
);

function ScrollBar({ gap, thumb }: { gap: string; thumb: string }) {
  return (
    <div className="my-px mr-px flex w-[15px] shrink-0 flex-col overflow-hidden rounded-[3px] border border-[#8a8380] bg-[#d6cdc6]">
      <span className="flex h-[14px] shrink-0 items-center justify-center border-b border-[#8a8380] bg-[#f6f4f1]">
        <Svg w={8} h={4} vb="0 0 8 4">
          <path d="M4 0L8 4H0Z" fill="#000" />
        </Svg>
      </span>
      <span className={"shrink-0 " + gap} />
      <span className={"flex shrink-0 flex-col items-center justify-center gap-0.5 border-y border-[#8a8380] bg-linear-to-r from-[#faf9f7] to-[#ece7e3] " + thumb}>
        <span className="h-px w-[7px] bg-[#b3aca7]" />
        <span className="h-px w-[7px] bg-[#b3aca7]" />
        <span className="h-px w-[7px] bg-[#b3aca7]" />
      </span>
      <span className="mt-auto flex h-[14px] shrink-0 items-center justify-center border-t border-[#8a8380] bg-[#f6f4f1]">
        <Svg w={8} h={4} vb="0 0 8 4">
          <path d="M0 0H8L4 4Z" fill="#000" />
        </Svg>
      </span>
    </div>
  );
}

const Side = ({ children, className = "" }: { children: React.ReactNode; className?: string }) => (
  <div className={"flex w-[29px] shrink-0 flex-col items-center border-t border-r border-t-white border-r-[#b5b0ac] " + className}>{children}</div>
);

const dots = "border-[#9a9896] border-dotted";

function DesignPanel() {
  return (
    <>
      <div className="flex h-[99px] shrink-0">
        <Side className="pt-[5px]">
          <NewSrc />
          <span className="h-[13px]" />
          <AddDoc />
          <span className="h-3" />
          <AddDoc two />
          <span className="h-2.5" />
          <More />
        </Side>
        <div className="flex min-w-0 flex-1 flex-col">
          <div className="flex h-6 shrink-0 items-center pl-1">
            <span className="w-[41px]">View:</span>
            <span className="flex h-3 w-3 items-center justify-center rounded-full border border-[#9a948f] bg-white">
              <span className="h-1.5 w-1.5 rounded-full bg-[#2c2c2c]" />
            </span>
            <span className="ml-1.5"><Chip /></span>
            <span className="ml-1 w-[109px]">Implementation</span>
            <span className="h-3 w-3 rounded-full border border-[#9a948f] bg-white" />
            <span className="ml-1.5"><Sim /></span>
            <span className="ml-1">Simulation</span>
          </div>
          <div className="flex min-h-0 flex-1 border border-[#b0aba6] border-r-[#c9c5c1]">
            <div className="ml-px flex min-w-0 flex-1 flex-col overflow-hidden bg-white">
              <div className="flex h-[27px] shrink-0 bg-[#efebe7]">
                <div className="flex w-[303px] items-center border-b border-[#a39c97] bg-linear-to-b from-[#efebe7] from-75% to-[#e4ddd7] pt-px pl-1">
                  <span>Hierarchy</span>
                  <span className="ml-auto h-5 w-px bg-[#c6c1bd]" />
                </div>
              </div>
              {["fulladder.v", "halfadder.v"].map((f, i) => (
                <div key={f} className="flex h-[18px] shrink-0 items-center">
                  <span className={"ml-[30px] h-full w-5 border-l " + dots} />
                  <span className={"w-px self-start border-l " + dots + (i ? " h-[9px]" : " h-full")} />
                  <span className={"w-2 border-t " + dots} />
                  <span className="ml-1"><VFile /></span>
                  <span className="ml-[6px]">{f}</span>
                </div>
              ))}
              <div className="flex h-[18px] w-[303px] shrink-0 items-start overflow-hidden bg-[#918d7c] text-white">
                <span className="mt-1.5 ml-[26px] h-2 w-2 border border-[#a5a291]" />
                <span className="mt-px ml-[9px]"><VFile /></span>
                <Svg w={8} h={8} vb="0 0 8 8" className="mt-px ml-[5px]">
                  <rect x="1.500" y="1.500" width="5" height="5" fill="#dff5df" stroke="#1f9a2c" strokeWidth="2" strokeDasharray="1.500 .7" />
                </Svg>
                <span className="mt-px ml-[9px] whitespace-nowrap leading-[15px]">arraymultiplier (arraymultiplier.v)</span>
              </div>
            </div>
            <ScrollBar gap="h-px" thumb="h-[28px]" />
          </div>
        </div>
      </div>
      <SplitH className="h-[6px] pt-px" />
      <div className="flex h-[107px] shrink-0">
        <Side className="pt-[7px]">
          <Play />
          <span className="mt-[9px] mb-[8px] h-px w-[15px] bg-[#d0ccc8]" />
          <ProcIcon />
          <span className="h-[13px]" />
          <ProcIcon off />
          <span className="h-[10px]" />
          <More />
        </Side>
        <div className="flex min-w-0 flex-1 flex-col">
          <div className="flex h-8 shrink-0 items-center pl-1.5">
            <Cycle />
            <span className="ml-2.5 tracking-normal">No Processes Running</span>
          </div>
          <div className="flex h-[75px] border border-[#b0aba6] border-r-[#c9c5c1]">
            <div className="ml-px flex min-w-0 flex-1 flex-col overflow-hidden bg-white">
              <div className="flex h-[27px] shrink-0 items-center border-b border-[#a39c97] bg-linear-to-b from-[#efebe7] from-75% to-[#e4ddd7] pt-px pl-1">
                <span>Processes: arraymultiplier</span>
                <span className="ml-auto h-5 w-px bg-[#c6c1bd]" />
              </div>
              {[
                ["View RTL Schematic", <Schem key="a" gold />],
                ["View Technology Schematic", <Schem key="b" />],
                ["Check Syntax", <Cycle key="c" />],
              ].map(([t, ic], i) => (
                <div key={i} className={"flex h-[18px] shrink-0 items-center " + (i === 1 ? "bg-[#918d7c] text-[#f3f1ea]" : "")}>
                  <span className={"ml-2.5 h-full w-5 border-l " + dots} />
                  <span className={"h-full w-px border-l " + dots} />
                  <span className={"w-2 border-t " + dots} />
                  <span className="ml-1">{ic}</span>
                  <span className="ml-[22px]">{t}</span>
                </div>
              ))}
            </div>
            <ScrollBar gap="h-[5px]" thumb="h-[28px]" />
          </div>
        </div>
      </div>
      <SplitH className="h-[6px] pt-px" />
    </>
  );
}

const Sq = ({ children }: { children: React.ReactNode }) => <span className="flex h-[30px] shrink-0 items-center justify-center">{children}</span>;
const HSep = () => (
  <span className="flex h-2 shrink-0 items-center">
    <span className="h-px w-[15px] bg-[#c9c5c1]" />
  </span>
);

function Schematic() {
  return (
    <svg width={1815} height={432} viewBox="103 360 1815 432" className="block bg-black" shapeRendering="crispEdges">
      <rect x="758.500" y="389.500" width="503" height="373" fill="none" stroke="#8c8c8c" />
      <g fontFamily="'Liberation Sans', sans-serif" fill="#00ff00">
        <text x="833" y="475" fontSize="48" textLength="302">arraymultiplier</text>
        <text x="833" y="709" fontSize="48" textLength="302">arraymultiplier</text>
        <text x="779" y="544" fontSize="20" textLength="67">A(15:0)</text>
        <text x="779" y="600" fontSize="20" textLength="67">B(15:0)</text>
        <text x="1122" y="544" fontSize="20" textLength="124">Product(31:0)</text>
      </g>
      <rect x="874.500" y="493.500" width="221" height="166" fill="none" stroke="#00ff00" />
      <path d="M874 493H902L874 521ZM1096 493H1067L1096 521ZM874 660H902L874 631ZM1096 660H1066L1096 630Z" fill="#00ff00" />
      <path d="M817 546H931V550H817ZM817 601H931V605H817ZM1037 546H1151V550H1037Z" fill="#00ff00" />
    </svg>
  );
}

type TabDef = { w: string; icon: React.ReactNode; text: string; active?: boolean };

const docTabs: TabDef[] = [
  { w: "w-[273px]", icon: <Sigma />, text: "Design Summary (Synthesized)" },
  { w: "w-[178px]", icon: <Doc />, text: "arraymultiplier.v" },
  { w: "w-[139px]", icon: <Doc />, text: "fulladder.v" },
  { w: "w-[143px]", icon: <Doc />, text: "halfadder.v" },
  { w: "w-[203px]", icon: <Stars />, text: "arraymultiplier.ngr:1" },
  { w: "w-[212px]", icon: <Schem gold />, text: "arraymultiplier (RTL1)" },
  { w: "w-[212px]", icon: <Schem gold />, text: "arraymultiplier (RTL2)" },
  { w: "w-[206px]", icon: <Stars />, text: "arraymultiplier.ngc:1" },
  { w: "w-[217px]", icon: <Schem />, text: "arraymultiplier (Tech1)", active: true },
];
const bottomTabs: TabDef[] = [
  { w: "w-[92px]", icon: <ConsoleI />, text: "Console" },
  { w: "w-[80px]", icon: <ErrorI />, text: "Errors" },
  { w: "w-[102px]", icon: <WarnI />, text: "Warnings" },
  { w: "w-[169px]", icon: <FindI />, text: "Find in Files Results" },
  { w: "w-[156px]", icon: <GridI />, text: "View by Category", active: true },
];

type TabsProps = { tabs: TabDef[]; closable?: boolean; className: string; idle: string; current: string };

function Tabs({ tabs, closable = false, className, idle, current }: TabsProps) {
  return (
    <div className={"flex shrink-0 items-start border-t border-[#9c9691] pl-px " + className}>
      {tabs.map((t, i) => (
        <div
          key={t.text}
          className={
            "flex shrink-0 items-center border-r border-[#9c9691] " +
            (i && !t.active ? "pl-1.5 " : "pl-[5px] ") +
            t.w +
            (t.active
              ? " -mt-px rounded-b-[3px] border-b-[3px] border-b-[#4a80b0] bg-linear-to-b from-[#efebe7] to-[#f6f3f0] pt-[2px] " + current
              : " rounded-b-[2px] border-b border-b-[#8a8380] bg-linear-to-b from-[#d0cbc6] to-[#ebe7e3] pb-[2px] shadow-[inset_0_-1px_#fff] " + idle)
          }
        >
          <span className="flex w-[18px] shrink-0 justify-center">{t.icon}</span>
          <span className={"whitespace-nowrap " + (i ? "ml-[10px]" : "ml-[9px] tracking-normal")}>{t.text}</span>
          {closable && (
            <span className="mr-[9px] ml-auto">
              <CloseX />
            </span>
          )}
        </div>
      ))}
    </div>
  );
}

const Chevron = ({ up = false }: { up?: boolean }) => (
  <Svg w={9} h={6} vb="0 0 9 6" className={up ? "rotate-180" : ""}>
    <path d="M0 0H2L4.500 2L7 0H9V2L4.500 6L0 2Z" fill="#000" />
  </Svg>
);
const HeadEnd = () => <span className="mr-px h-5 w-px shrink-0 bg-[#c6c1bd]" />;
const head = "flex h-[27px] shrink-0 items-center border-b border-[#a39c97] bg-linear-to-b from-[#efebe7] from-75% to-[#e4ddd7] pl-1";

function Column({ title, w, children }: { title: string; w: string; children?: React.ReactNode }) {
  return (
    <div className={"flex shrink-0 flex-col border border-[#b0aba6] bg-white px-px pb-px " + w}>
      <div className={head}>
        <span>{title}</span>
        <span className="mr-2 ml-auto"><Chevron /></span>
        <HeadEnd />
      </div>
      {children}
    </div>
  );
}

function CategoryPanel() {
  return (
    <div className="flex h-[185px] shrink-0">
      <div className="flex w-[918px] shrink-0 flex-col pl-1">
        <div className="flex h-[25px] items-start justify-center pt-px pr-0.5 font-bold tracking-[0.020px]">Design Objects of Top Level Block</div>
        <div className="flex h-[155px] gap-[6px]">
          <Column title="Instances" w="w-[300px]">
            <div className="flex h-[18px] items-center">
              <span className={"mb-[9px] ml-2.5 h-[9px] w-px border-l " + dots} />
              <span className={"w-2 border-t " + dots} />
              <span className="ml-1"><HierI /></span>
              <span className="ml-1.5">arraymultiplier</span>
            </div>
          </Column>
          <Column title="Pins" w="w-[301px]" />
          <Column title="Signals" w="w-[300px]" />
        </div>
      </div>
      <div className="flex w-[13px] shrink-0 items-center justify-center pr-px pb-1">
        <span className="h-10 w-1 bg-[repeating-linear-gradient(180deg,#b5b1ad_0_1px,transparent_1px_2px)]" />
      </div>
      <div className="flex flex-1 flex-col pr-1">
        <div className="flex h-[25px] items-start justify-center pt-px pl-px font-bold tracking-normal">Properties: (No Selection)</div>
        <div className="flex h-[155px] flex-col border border-[#b0aba6] bg-white px-px pb-px">
          <div className={head}>
            <span>Name</span>
            <span className="mr-2 ml-auto"><Chevron up /></span>
            <HeadEnd />
            <span className="w-[452px] pl-1">Value</span>
            <HeadEnd />
          </div>
        </div>
      </div>
    </div>
  );
}

export default function App() {
  return (
    <div className="flex h-[1080px] w-[1920px] flex-col overflow-hidden bg-[#efebe7] font-['DejaVu_Sans',sans-serif] text-[13px] leading-[18px] tracking-[0.040px] text-[#111]">
      <TopBar />
      <div className="flex min-h-0 flex-1">
        <Dock />
        <div className="flex min-w-0 flex-1 flex-col">
          <TitleBar />
          <MenuBar />
          <Toolbar />
          <PanelTitle className="h-[19px]" textClass="-mt-[3px]">Design</PanelTitle>
          <DesignPanel />
          <div className="flex h-[437px] shrink-0">
            <Side>
              <span className="flex h-[29px] shrink-0 items-center justify-center"><ArrowSel /></span>
              <span className="mt-[2px] mb-[2px] flex h-[26px] w-[26px] shrink-0 items-center justify-center rounded-[3px] border border-[#857f7b] bg-[#cdc8c4]">
                <Expand />
              </span>
              <HSep />
              <Sq><Stars /></Sq>
              <HSep />
              <Sq><Cone /></Sq>
              <Sq><Cone flip /></Sq>
              <HSep />
              <Sq><Gray1 /></Sq>
              <Sq><Gray2 /></Sq>
              <Sq><Gray3 /></Sq>
              <Sq><Gray3 x /></Sq>
              <HSep />
              <Sq><Gray4 /></Sq>
              <Sq><TextA /></Sq>
              <HSep />
              <Sq><UpHier /></Sq>
              <span className="mt-auto mb-[2px]"><More /></span>
            </Side>
            <div className="flex-1 border border-[#b0aba6] pt-px pl-px">
              <Schematic />
            </div>
          </div>
          <Tabs tabs={docTabs} closable className="h-[26px]" idle="h-[24px]" current="h-[27px]" />
          <SplitH className="h-[7px] pt-[2px]" />
          <div className="border-t border-[#cbc7c3]">
            <PanelTitle className="h-[18px]" textClass="-mt-px">View by Category</PanelTitle>
          </div>
          <CategoryPanel />
          <Tabs tabs={bottomTabs} className="h-[24px]" idle="h-[22px]" current="h-[25px]" />
          <div className="mt-auto pr-[5px] pb-[2px] text-right">[724,172]</div>
        </div>
      </div>
    </div>
  );
}
